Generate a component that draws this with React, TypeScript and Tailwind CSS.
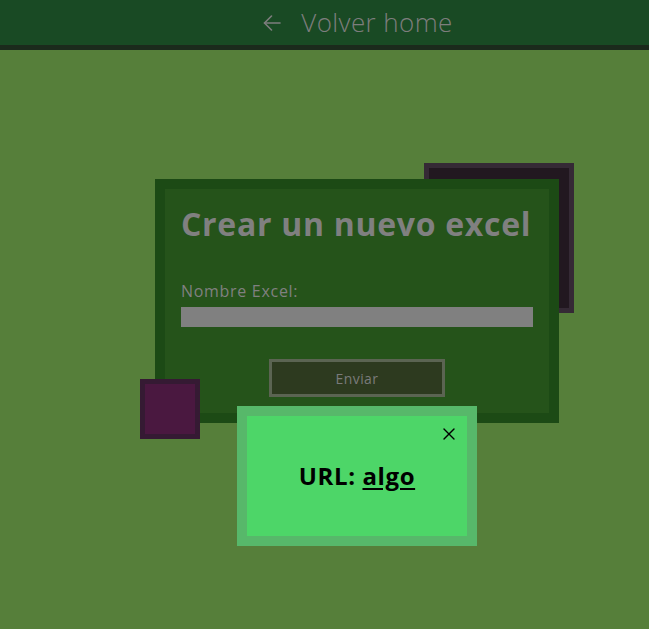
import { X } from "lucide-react";

export default function App() {
  return (
    <div className="min-h-[629px] bg-[#567f3a] font-['Open_Sans',sans-serif]">
      {/* header */}
      <header className="h-[50px] bg-[#194a24] border-b-[5px] border-[#1b2a1c] flex items-center justify-center pl-[67px]">
        <a href="#" className="flex items-center gap-[20px] text-[#7d7d7d]">
          <svg width="18" height="16" viewBox="0 0 18 16" fill="none" stroke="currentColor" strokeWidth="1.6" strokeLinecap="round" strokeLinejoin="round">
            <path d="M17 8H1.5" />
            <path d="M8.5 1L1.5 8l7 7" />
          </svg>
          <span className="text-[26px] font-light leading-none pb-[2px] tracking-[0.4px]">Volver home</span>
        </a>
      </header>

      {/* main */}
      <main className="pt-[129px] pl-[155px]">
        <div className="relative w-[404px]">
          {/* dark box behind */}
          <div className="absolute left-[269px] top-[-16px] w-[150px] h-[150px] bg-[#221820] border-[5px] border-[#352a35]" />

          <form className="relative bg-[#25531a] border-[10px] border-[#1c4a15] px-4 pt-[16px] pb-4 flex flex-col">
            <h1 className="whitespace-nowrap text-[32px] font-bold leading-[38px] text-[#808080] tracking-[0.7px]">Crear un nuevo excel</h1>
            <label className="mt-[36px] text-[16px] leading-6 text-[#808080] tracking-[0.7px]">Nombre Excel:</label>
            <input className="mt-1 h-5 w-full bg-[#808080] outline-none" />
            <button type="button" className="mt-8 self-center w-[176px] h-[38px] border-[3px] border-[#5b6452] bg-[#2d3a1f] text-[14px] tracking-[0.4px] text-[#7a7a7a]">
              Enviar
            </button>
          </form>

          {/* small purple box */}
          <div className="absolute left-[-15px] top-[200px] w-[60px] h-[60px] bg-[#4a1840] border-[5px] border-[#351a33]" />

          {/* modal */}
          <div className="absolute left-[82px] top-[227px] w-[240px] h-[140px] bg-[#4dd668] border-[10px] border-[#57b86a] flex items-center justify-center">
            <button className="absolute right-[8px] top-[8px] text-black">
              <X size={20} strokeWidth={1.6} />
            </button>
            <p className="text-[24px] font-bold text-black tracking-[0.6px]">
              URL: <a href="#" className="underline underline-offset-[3px]">algo</a>
            </p>
          </div>
        </div>
      </main>
    </div>
  );
}
